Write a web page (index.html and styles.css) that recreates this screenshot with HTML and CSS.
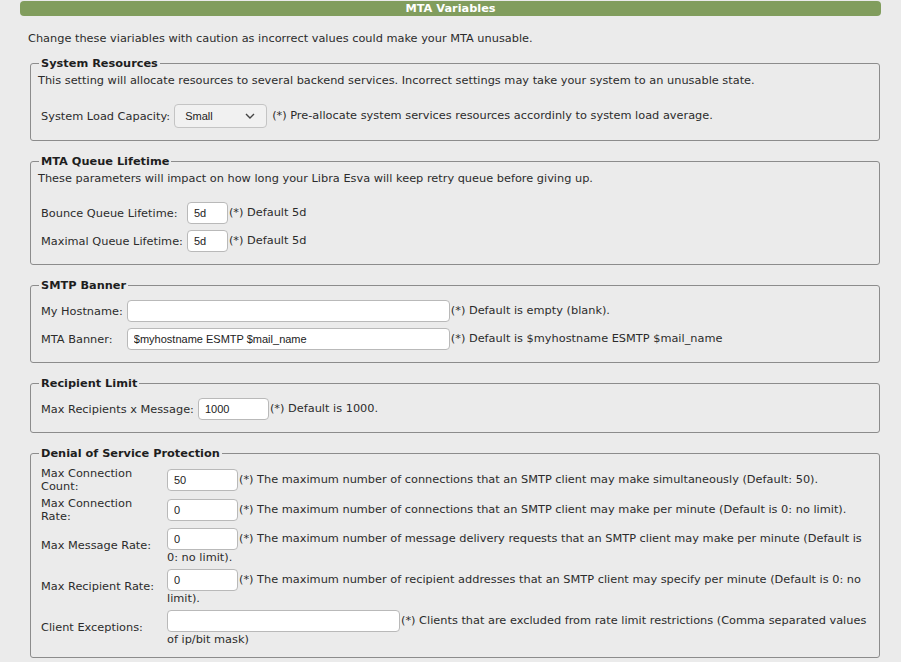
FILE: index.html
```html
<!DOCTYPE html>
<html>
<head>
<meta charset="utf-8">
<title>MTA Variables</title>
<link rel="stylesheet" href="styles.css">
</head>
<body>
<div class="page">
  <div class="titlebar">MTA Variables</div>
  <p class="intro">Change these viariables with caution as incorrect values could make your MTA unusable.</p>

  <fieldset class="group">
    <legend>System Resources</legend>
    <p class="desc">This setting will allocate resources to several backend services. Incorrect settings may take your system to an unusable state.</p>
    <table class="form">
      <tr>
        <td class="lbl">System Load Capacity:</td>
        <td class="fld"><span class="select">Small<svg class="chev" width="10" height="6" viewBox="0 0 10 6"><path d="M1 1 L5 5 L9 1" fill="none" stroke="#444" stroke-width="1.4"/></svg></span>(*) Pre-allocate system services resources accordinly to system load average.</td>
      </tr>
    </table>
  </fieldset>

  <fieldset class="group">
    <legend>MTA Queue Lifetime</legend>
    <p class="desc">These parameters will impact on how long your Libra Esva will keep retry queue before giving up.</p>
    <table class="form">
      <tr>
        <td class="lbl">Bounce Queue Lifetime:</td>
        <td class="fld"><input class="box w40" type="text" value="5d">(*) Default 5d</td>
      </tr>
      <tr>
        <td class="lbl">Maximal Queue Lifetime:</td>
        <td class="fld"><input class="box w40" type="text" value="5d">(*) Default 5d</td>
      </tr>
    </table>
  </fieldset>

  <fieldset class="group">
    <legend>SMTP Banner</legend>
    <table class="form">
      <tr>
        <td class="lbl">My Hostname:</td>
        <td class="fld"><input class="box w322" type="text" value="">(*) Default is empty (blank).</td>
      </tr>
      <tr>
        <td class="lbl">MTA Banner:</td>
        <td class="fld"><input class="box w322" type="text" value="$myhostname ESMTP $mail_name">(*) Default is $myhostname ESMTP $mail_name</td>
      </tr>
    </table>
  </fieldset>

  <fieldset class="group">
    <legend>Recipient Limit</legend>
    <table class="form">
      <tr>
        <td class="lbl">Max Recipients x Message:</td>
        <td class="fld"><input class="box w70" type="text" value="1000">(*) Default is 1000.</td>
      </tr>
    </table>
  </fieldset>

  <fieldset class="group">
    <legend>Denial of Service Protection</legend>
    <table class="form dos">
      <tr>
        <td class="lbl wrap">Max Connection Count:</td>
        <td class="fld"><input class="box w70" type="text" value="50">(*) The maximum number of connections that an SMTP client may make simultaneously (Default: 50).</td>
      </tr>
      <tr>
        <td class="lbl wrap">Max Connection Rate:</td>
        <td class="fld"><input class="box w70" type="text" value="0">(*) The maximum number of connections that an SMTP client may make per minute (Default is 0: no limit).</td>
      </tr>
      <tr>
        <td class="lbl wrap">Max Message Rate:</td>
        <td class="fld"><input class="box w70" type="text" value="0">(*) The maximum number of message delivery requests that an SMTP client may make per minute (Default is 0: no limit).</td>
      </tr>
      <tr>
        <td class="lbl wrap">Max Recipient Rate:</td>
        <td class="fld"><input class="box w70" type="text" value="0">(*) The maximum number of recipient addresses that an SMTP client may specify per minute (Default is 0: no limit).</td>
      </tr>
      <tr>
        <td class="lbl wrap">Client Exceptions:</td>
        <td class="fld"><input class="box w232" type="text" value="">(*) Clients that are excluded from rate limit restrictions (Comma separated values of ip/bit mask)</td>
      </tr>
    </table>
  </fieldset>
</div>
</body>
</html>
```

FILE: styles.css
```css
html, body {
  margin: 0;
  padding: 0;
  background: #ebebeb;
}

body {
  font-family: "DejaVu Sans", "Liberation Sans", sans-serif;
  font-size: 8.5pt;
  line-height: 13px;
  color: #2b2b2b;
}

.page {
  width: 861px;
  margin: 1px 0 0 20px;
}

.titlebar {
  height: 15px;
  line-height: 15px;
  background: #819d5d;
  border-radius: 4px;
  color: #ffffff;
  font-weight: bold;
  text-align: center;
}

.intro {
  margin: 16px 0 12px 8px;
}

.group {
  margin: 0 1px 14px 10px;
  padding: 4px 7px 8px 7px;
  border: 1px solid #8c8c8c;
  border-radius: 3px;
  min-width: 0;
}

.group legend {
  font-weight: bold;
  padding: 0 2px;
  margin-left: 1px;
  color: #1e1e1e;
}

.desc {
  margin: 0 0 13px 0;
}

.form {
  border-collapse: separate;
  border-spacing: 2px;
}

.form td {
  padding: 2px 1px;
  vertical-align: middle;
}

.lbl {
  white-space: nowrap;
}

.dos {
  width: 100%;
}

.dos td {
  padding: 1px;
}

.dos .lbl.wrap {
  white-space: normal;
  width: 122px;
}

.box {
  box-sizing: border-box;
  height: 22px;
  margin: 0 1px 0 0;
  padding: 0 6px;
  border: 1px solid #b9b9b9;
  border-radius: 4px;
  background: #ffffff;
  font-family: "Liberation Sans", Arial, sans-serif;
  font-size: 11px;
  color: #222;
  vertical-align: middle;
}

.dos .box {
  margin: 1px 1px 1px 0;
}

.w40 { width: 41px; }
.w70 { width: 71px; }
.w232 { width: 233px; }
.w322 { width: 323px; }

.select {
  display: inline-flex;
  align-items: center;
  justify-content: space-between;
  box-sizing: border-box;
  width: 93px;
  height: 24px;
  margin-right: 5px;
  padding: 0 11px 0 10px;
  border: 1px solid #c4c4c4;
  border-radius: 4px;
  background: #f1f1f1;
  font-family: "Liberation Sans", Arial, sans-serif;
  font-size: 11px;
  color: #222;
  vertical-align: middle;
}

.chev {
  display: block;
}
```
